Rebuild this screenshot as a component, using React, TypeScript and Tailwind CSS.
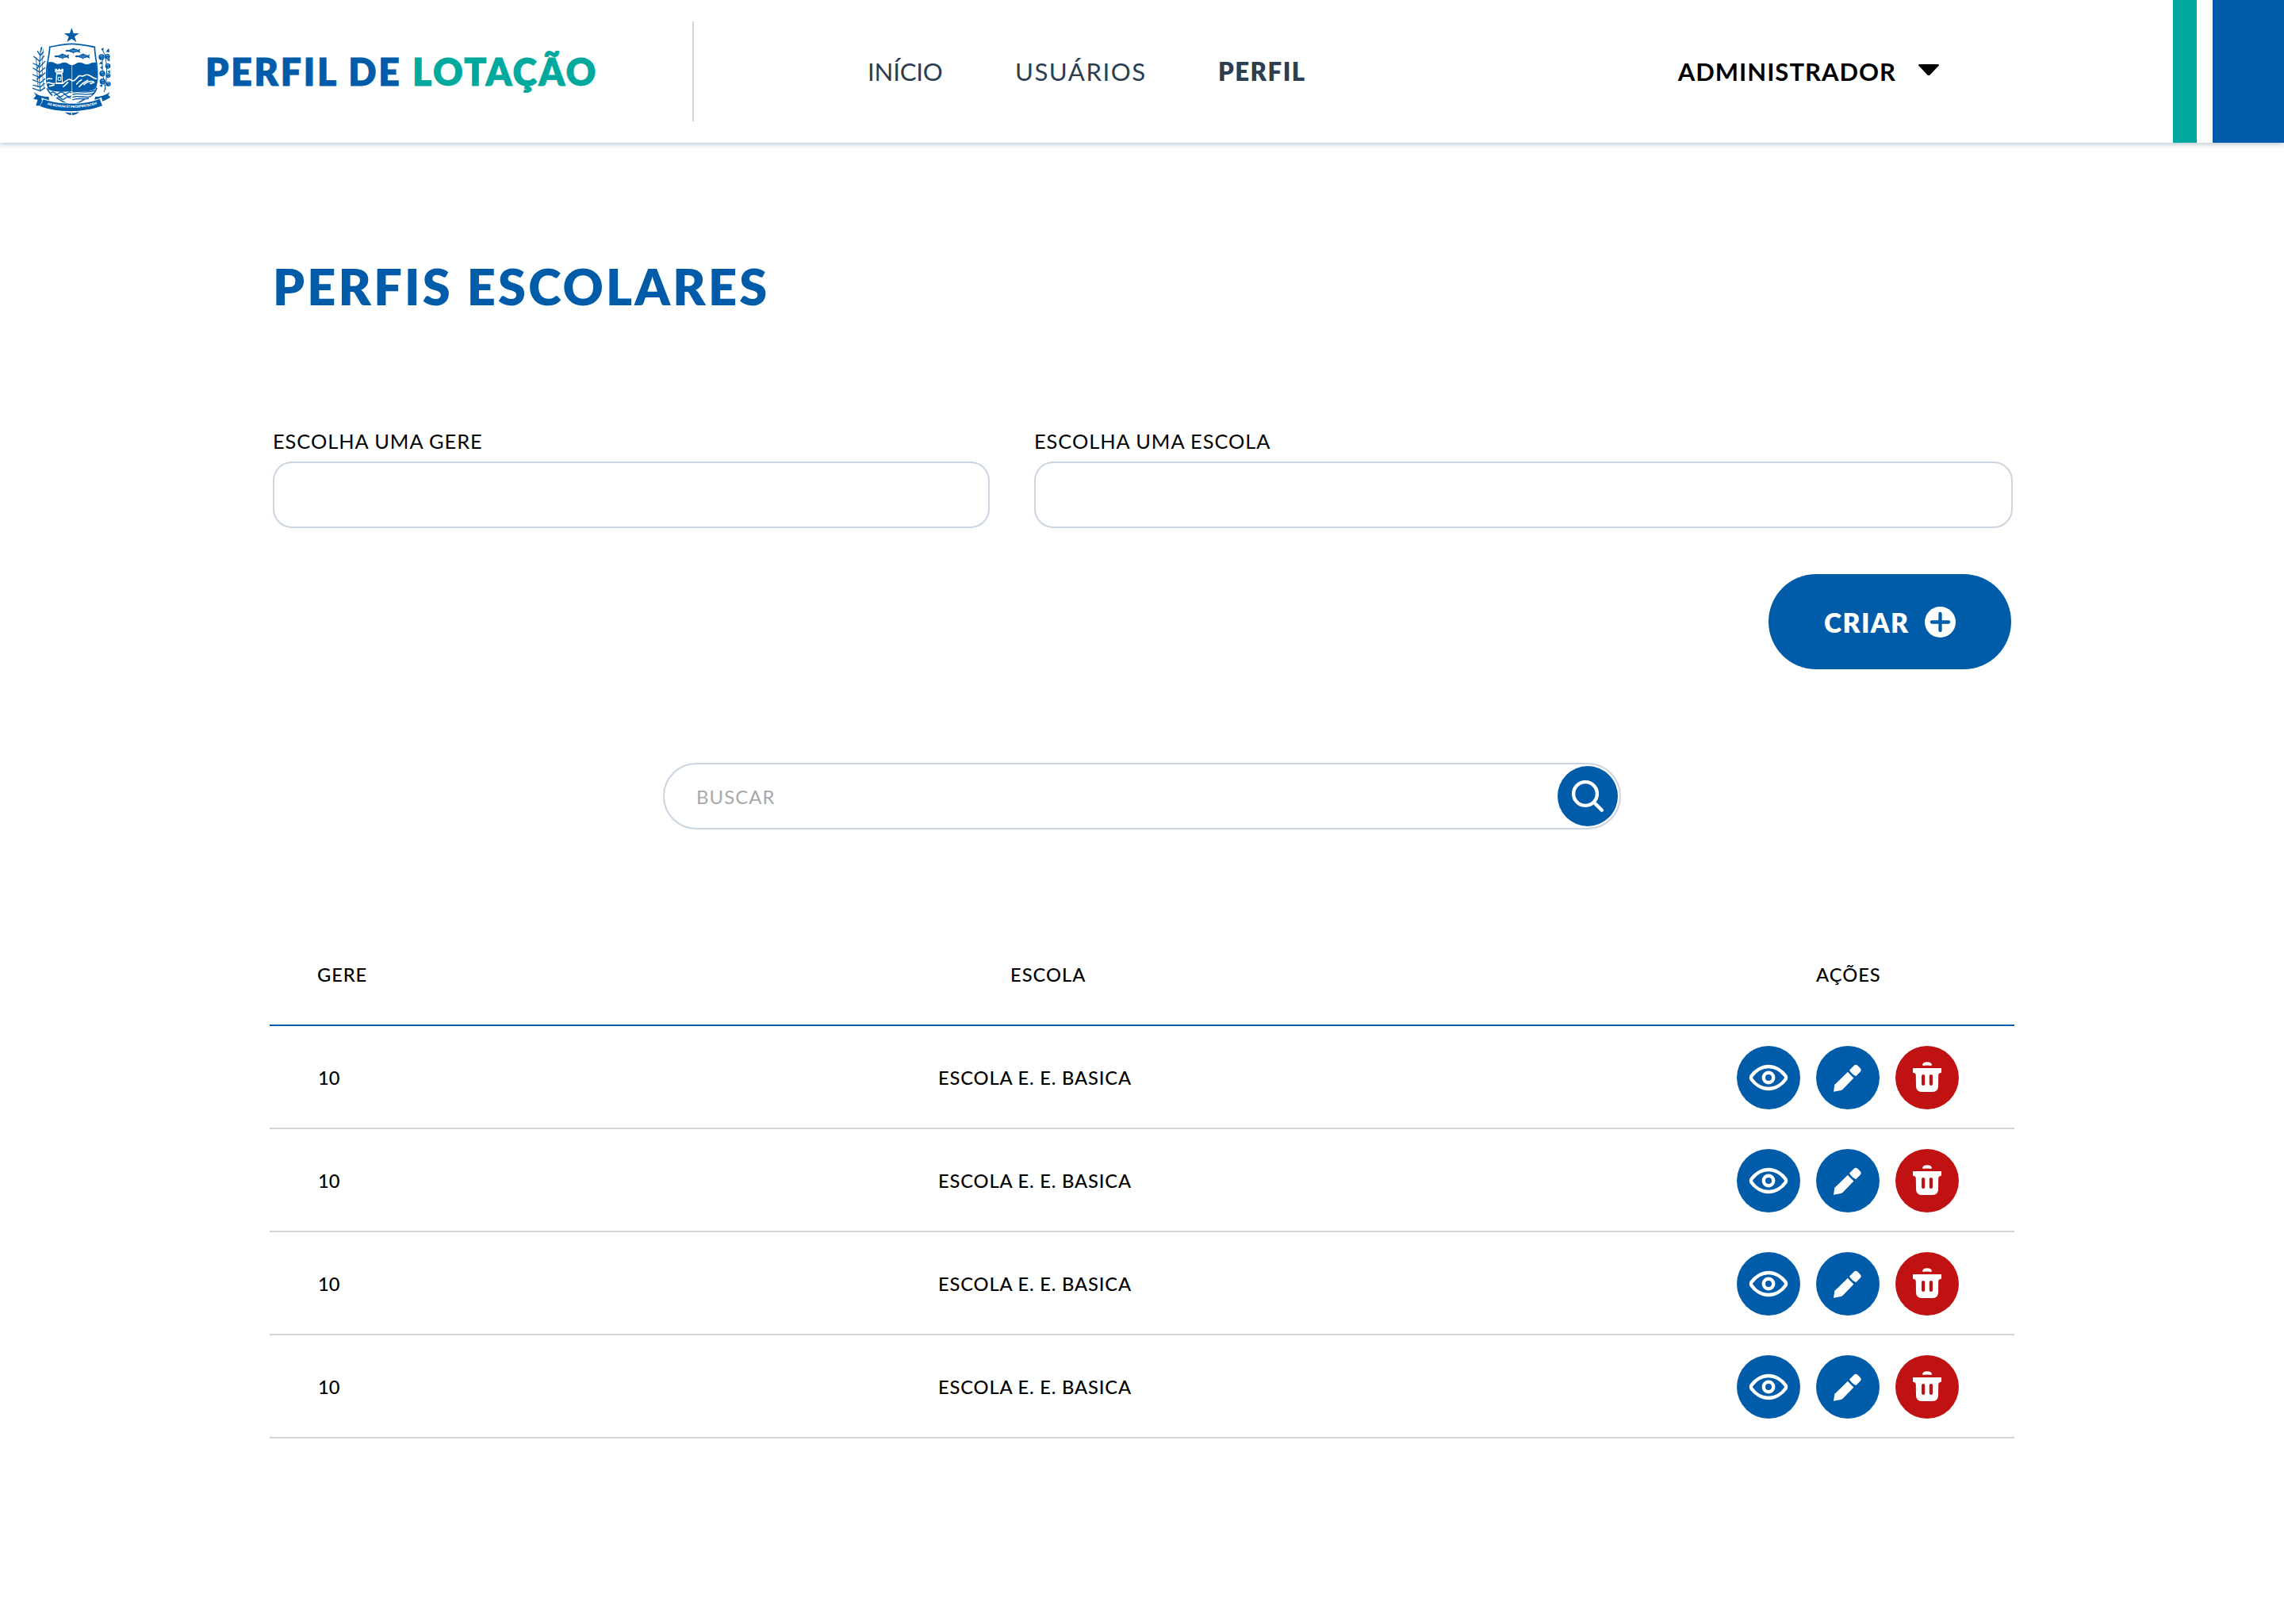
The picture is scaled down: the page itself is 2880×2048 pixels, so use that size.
const navItems = [
  { label: "INÍCIO", className: "font-normal tracking-[-0.2px] w-[186px]" },
  { label: "USUÁRIOS", className: "font-normal tracking-[1.5px] w-[256px]" },
  { label: "PERFIL", className: "font-extrabold tracking-[1.45px] w-[120px]" },
];

const schools = [
  { id: 1, gere: "10", name: "ESCOLA E. E. BASICA" },
  { id: 2, gere: "10", name: "ESCOLA E. E. BASICA" },
  { id: 3, gere: "10", name: "ESCOLA E. E. BASICA" },
  { id: 4, gere: "10", name: "ESCOLA E. E. BASICA" },
];

const BLUE = "#005ca9";

function Fish({ x, y }: { x: number; y: number }) {
  return (
    <g transform={`translate(${x} ${y})`}>
      <path d="M-28 -1 L-20 -4 L-14 -2 C-6 -9 10 -9 20 -3 L29 -8 L26 0 L29 9 L19 4 C8 9 -6 8 -14 3 L-24 4 Z" fill={BLUE} />
      <path d="M-8 -2 L16 -1 M-4 3 L12 3" stroke="#fff" strokeWidth="1.5" strokeDasharray="3 2" />
      <path d="M-4 -6 L4 -11 L8 -6 M-2 6 L4 11 L6 6" fill={BLUE} />
    </g>
  );
}

function Crest() {
  return (
    <svg viewBox="0 0 420 420" className="h-[140px] w-[140px] shrink-0" fill="none">
      <path d="M211 45 L218 66 L239 66 L222 79 L229 99 L211 87 L193 99 L200 79 L183 66 L204 66 Z" fill={BLUE} />

      {/* sugar cane branch */}
      <g stroke={BLUE} strokeLinecap="round">
        <path d="M96 120 C88 160 86 220 92 284" strokeWidth="3" />
        <path d="M104 126 C98 160 98 220 106 270" strokeWidth="2" />
        <path d="M76 158 C80 200 82 240 84 270" strokeWidth="2.5" />
        <path
          d="M92 150 L82 134 M92 150 L104 136 M90 172 L68 154 M90 172 L107 152 M88 190 L66 180 M90 194 L110 172 M88 212 L66 198 M90 214 L110 196 M88 232 L64 222 M90 234 L110 216 M88 252 L64 242 M92 254 L110 238 M90 268 L66 262 M92 270 L108 256 M92 284 L64 274 M92 284 L110 272 M80 200 L92 180 M80 240 L96 222 M94 134 L98 120"
          strokeWidth="4"
        />
      </g>

      {/* cotton branch */}
      <g>
        <path d="M328 128 C350 170 346 240 334 288 M330 150 C322 190 330 240 340 280" stroke={BLUE} strokeWidth="3" />
        <path
          d="M322 126 L332 120 L330 134 Z M340 136 L352 122 L354 138 Z M314 182 L324 172 L328 182 Z M344 168 L354 160 L356 172 Z M318 196 L328 190 L328 202 Z M316 264 L328 258 L326 270 Z M346 210 L356 206 L356 218 Z"
          fill={BLUE}
        />
        {[
          [324, 156, 11],
          [346, 154, 10],
          [348, 190, 10],
          [327, 218, 11],
          [349, 226, 9],
          [328, 248, 11],
          [350, 258, 9],
        ].map(([cx, cy, r]) => (
          <g key={`${cx}-${cy}`}>
            <circle cx={cx} cy={cy} r={r} fill={BLUE} />
            <path d={`M${cx - 5} ${cy - 3} q5 -5 9 0 M${cx} ${cy + 2} l4 4`} stroke="#fff" strokeWidth="2" />
          </g>
        ))}
      </g>

      {/* shield */}
      <path
        d="M128 118 C152 114 178 106 212 106 C246 106 272 114 298 118 C298 150 308 178 308 216 C308 262 308 300 212 340 C114 300 116 262 116 216 C116 178 128 150 128 118 Z"
        fill="#fff"
        stroke={BLUE}
        strokeWidth="5"
      />
      <path
        d="M122 176 C134 172 142 176 150 180 C162 187 172 176 184 176 C196 176 202 186 212 186 C224 186 230 175 242 176 C254 176 262 186 274 183 C284 180 290 174 303 177 C307 200 307 240 305 262 C300 288 290 290 212 290 C134 290 124 288 119 262 C117 240 117 200 122 176 Z"
        fill={BLUE}
      />
      <Fish x={215} y={132} />
      <Fish x={173} y={153} />
      <Fish x={251} y={153} />

      {/* tower */}
      <path d="M148 200 L148 212 L153 217 L150 258 L178 258 L176 217 L180 212 L180 200 L172 200 L172 205 L168 205 L168 200 L160 200 L160 205 L156 205 L156 200 Z" fill="#fff" />
      <path d="M157 221 H172 L174 252 H154 Z" fill={BLUE} />
      <path d="M152 212 H176" stroke={BLUE} strokeWidth="2" />
      <path d="M160 232 H170 V244 H160 Z" fill={BLUE} stroke="#fff" strokeWidth="3" />

      {/* hills */}
      <g stroke="#fff" strokeWidth="5" strokeLinecap="round" strokeLinejoin="round">
        <path d="M118 240 C124 234 130 240 136 238 M118 254 C128 248 134 260 146 256 M128 266 L144 262 M176 256 C188 250 192 240 202 240 C208 240 210 246 216 246 C224 246 228 236 238 228 C244 222 248 230 254 228 C262 224 268 220 276 224 C286 228 292 236 304 238" />
        <path d="M180 268 C186 260 190 262 196 252 M230 258 C236 250 240 246 248 242 M240 268 C250 256 258 250 272 244 M258 260 C266 252 278 246 292 248 M282 256 L296 252" />
      </g>

      {/* water, both halves */}
      <path d="M118 276 C124 290 134 302 150 310 H211 V285 C180 289 140 289 118 276 Z M213 285 C250 288 290 288 306 272 C302 290 288 304 270 314 H213 Z" fill="#fff" />
      <g stroke={BLUE} strokeWidth="4">
        <path d="M132 292 q8 -8 16 0 t16 0 t16 0 t16 0 t14 0 M144 302 q8 -8 16 0 t16 0 t16 0 t18 0 M154 312 q8 -8 16 0 t16 0 t22 0" />
        <path d="M214 298 C236 288 262 306 296 292 M214 308 C236 298 262 314 286 304 M214 318 C236 308 252 318 276 312 M214 288 C240 282 262 296 302 282" />
        <path d="M118 274 C122 286 130 294 138 302 M306 272 C302 286 296 294 286 302" strokeWidth="5" />
      </g>
      <path d="M212 186 V322" stroke="#fff" strokeWidth="2" />

      {/* ribbon */}
      <path d="M68 288 C84 302 104 306 124 306 L128 328 C106 328 96 324 84 318 L66 314 L76 302 Z" fill={BLUE} />
      <path d="M356 288 C340 300 322 306 300 306 L296 328 C320 328 330 322 340 318 L358 308 L349 300 Z" fill={BLUE} />
      <path d="M98 310 C160 336 264 336 324 308 L332 342 C268 374 152 374 90 344 Z" fill="#fff" />
      <path d="M104 316 C164 338 260 338 317 314 L327 340 C262 366 160 368 92 342 Z" fill={BLUE} />
      <path d="M84 312 L100 318 L92 340 L76 340 Z" fill={BLUE} />
      <path id="crest-motto" d="M119 336 C170 352 254 352 307 334" />
      <text fill="#fff" fontFamily="Lato, sans-serif" fontWeight="800" fontSize="12.5">
        <textPath href="#crest-motto" textLength="190">AD BONVM ET PROSPERITATEM</textPath>
      </text>
      <path d="M186 364 C200 368 224 368 240 363 C234 370 224 375 211 376 C200 375 190 370 186 364 Z" fill={BLUE} />
      <path d="M211 364 V377" stroke="#fff" strokeWidth="3" />
    </svg>
  );
}

function EyeIcon() {
  return (
    <svg viewBox="0 0 80 80" className="h-20 w-20" fill="none" stroke="#fff" strokeWidth="4.4">
      <path d="M18.4 42 Q17.4 40 18.4 38 C23 31.6 31 26 40 26 C49 26 57 31.6 61.6 38 Q62.6 40 61.6 42 C57 48.4 49 54 40 54 C31 54 23 48.4 18.4 42 Z" />
      <circle cx="40" cy="40" r="6.2" />
    </svg>
  );
}

function PencilIcon() {
  return (
    <svg viewBox="0 0 80 80" className="h-20 w-20" fill="#fff">
      <path d="M40 33 L47.4 40.6 L33.6 54.8 Q32.6 55.7 31.4 56 L22 57.8 L23.4 48.8 Q23.6 47.7 24.4 48 Z" />
      <path d="M24.2 48.4 L40 33 L44 42 L30 54 Z" />
      <path d="M42 30.6 L47.6 24.9 Q50 22.6 52.4 24.8 L55.6 28 Q57.8 30.3 55.6 32.7 L50.4 38 Q48.4 37.8 45.4 35 Q42.4 32 42 30.6 Z" />
    </svg>
  );
}

function TrashIcon() {
  return (
    <svg viewBox="0 0 80 80" className="h-20 w-20" fill="#fff">
      <path d="M34 23.6 Q35 20.2 40 20.2 Q45 20.2 46 23.6 Q46 25.2 43.6 24.8 Q40 24 36.4 24.8 Q34 25.2 34 23.6 Z" />
      <path
        fillRule="evenodd"
        d="M22 28 H58 V33 Q58 34 57 34 Q54.4 34.2 54.2 37 L54 51 Q53.8 57.6 47 58 H33 Q26.2 57.6 26 51 L25.8 37 Q25.6 34.2 23 34 Q22 34 22 33 Z M33 38 V48 Q33 50 35.1 50 Q37.2 50 37.2 48 V38 Q37.2 36 35.1 36 Q33 36 33 38 Z M42.8 38 V48 Q42.8 50 44.9 50 Q47 50 47 48 V38 Q47 36 44.9 36 Q42.8 36 42.8 38 Z"
      />
    </svg>
  );
}

function Header() {
  return (
    <header className="flex h-[180px] w-full items-center bg-white shadow-[0_2px_6px_rgba(44,82,110,0.32)]">
      <div className="flex w-[259px] pl-5">
        <Crest />
      </div>
      <div className="w-[614px] pt-0.5 text-[46.4px] font-extrabold text-[#005ca9] [-webkit-text-stroke:0.8px]">
        <span className="tracking-[2.75px]">PERFIL DE </span>
        <span className="tracking-[2.3px] text-[#00a99d]">LOTAÇÃO</span>
      </div>
      <div className="h-[126px] w-0.5 bg-[#cbd5e1]" />
      <nav className="ml-[219px] flex pt-px text-[31.2px] text-[#2c3e50]">
        {navItems.map((item) => (
          <a key={item.label} className={item.className}>
            {item.label}
          </a>
        ))}
      </nav>
      <button className="ml-auto flex items-center gap-[27px] text-black">
        <span className="pt-px text-[31px] font-bold tracking-[1px]">ADMINISTRADOR</span>
        <svg viewBox="0 0 28 16" className="mb-1 h-4 w-7" fill="#000" stroke="#000" strokeWidth="2" strokeLinejoin="round">
          <path d="M2 2 H26 L14.6 14 H13.4 Z" />
        </svg>
      </button>
      <div className="ml-[294px] flex h-full gap-5">
        <div className="w-[30px] bg-[#00a99d]" />
        <div className="w-[90px] bg-[#005ca9]" />
      </div>
    </header>
  );
}

function Field({ label, className }: { label: string; className: string }) {
  return (
    <label className={className}>
      <span className="block h-9 text-[25.4px] leading-9 tracking-[0.95px] text-black">{label}</span>
      <input className="mt-2 block h-[84px] w-full rounded-[24px] border-2 border-[#cbd5e1] bg-white px-6 text-2xl outline-none" />
    </label>
  );
}

function SchoolsTable() {
  return (
    <section className="mx-[340px] mt-[120px] text-[23.7px] font-medium text-black">
      <div className="grid h-32 grid-cols-[934px_1016px_1fr] items-center border-b-2 border-[#005ca9] pt-0.5">
        <span className="pl-[60px] tracking-[0.9px]">GERE</span>
        <span className="tracking-[1px]">ESCOLA</span>
        <span className="tracking-[1px]">AÇÕES</span>
      </div>
      {schools.map((school) => (
        <div key={school.id} className="grid h-[130px] grid-cols-[843px_1007px_1fr] items-center border-b-2 border-[#d4d4d4]">
          <span className="pt-1 pl-[61px]">{school.gere}</span>
          <span className="pt-1 tracking-[0.85px]">{school.name}</span>
          <div className="flex gap-5 pt-0.5">
            <button className="size-20 rounded-full bg-[#005ca9]">
              <EyeIcon />
            </button>
            <button className="size-20 rounded-full bg-[#005ca9]">
              <PencilIcon />
            </button>
            <button className="size-20 rounded-full bg-[#c01212]">
              <TrashIcon />
            </button>
          </div>
        </div>
      ))}
    </section>
  );
}

export default function App() {
  return (
    <div className="min-h-[2048px] w-full bg-white font-['Lato','Open_Sans',sans-serif] whitespace-nowrap">
      <Header />
      <main>
        <h1 className="mt-[140px] ml-[344px] h-20 pt-px text-[63px] leading-[80px] font-extrabold tracking-[3.2px] text-[#005ca9]">
          PERFIS ESCOLARES
        </h1>
        <form className="mt-[138px] mr-[342px] ml-[344px]">
          <div className="flex gap-14">
            <Field label="ESCOLHA UMA GERE" className="w-[904px]" />
            <Field label="ESCOLHA UMA ESCOLA" className="w-[1234px]" />
          </div>
          <button
            type="button"
            className="mt-[58px] mr-0.5 ml-auto flex h-[120px] w-[306px] items-center rounded-full bg-[#005ca9] pl-[70px] text-white"
          >
            <span className="w-[127px] pt-0.5 text-left text-[33.6px] font-extrabold tracking-[1.4px]">CRIAR</span>
            <svg viewBox="0 0 39 39" className="size-[39px]" fill="none">
              <circle cx="19.5" cy="19.5" r="19.5" fill="#fff" />
              <path d="M19.5 9 V30 M9 19.5 H30" stroke={BLUE} strokeWidth="4.3" strokeLinecap="round" />
            </svg>
          </button>
        </form>
        <div className="mx-auto mt-[118px] flex h-[84px] w-[1208px] items-center rounded-full border-2 border-[#cbd5e1] bg-white pr-0.5 pl-10">
          <input
            placeholder="BUSCAR"
            className="h-full flex-1 bg-transparent text-[23.9px] font-normal tracking-[1.1px] outline-none placeholder:text-[#a9a9a9]"
          />
          <button className="size-[76px] rounded-full bg-[#005ca9]">
            <svg viewBox="0 0 76 76" className="size-[76px]" fill="none" stroke="#fff" strokeLinecap="round">
              <circle cx="35" cy="35" r="14.9" strokeWidth="4.4" />
              <path d="M46 46 L55.8 55.8" strokeWidth="4.4" />
            </svg>
          </button>
        </div>
        <SchoolsTable />
      </main>
    </div>
  );
}
